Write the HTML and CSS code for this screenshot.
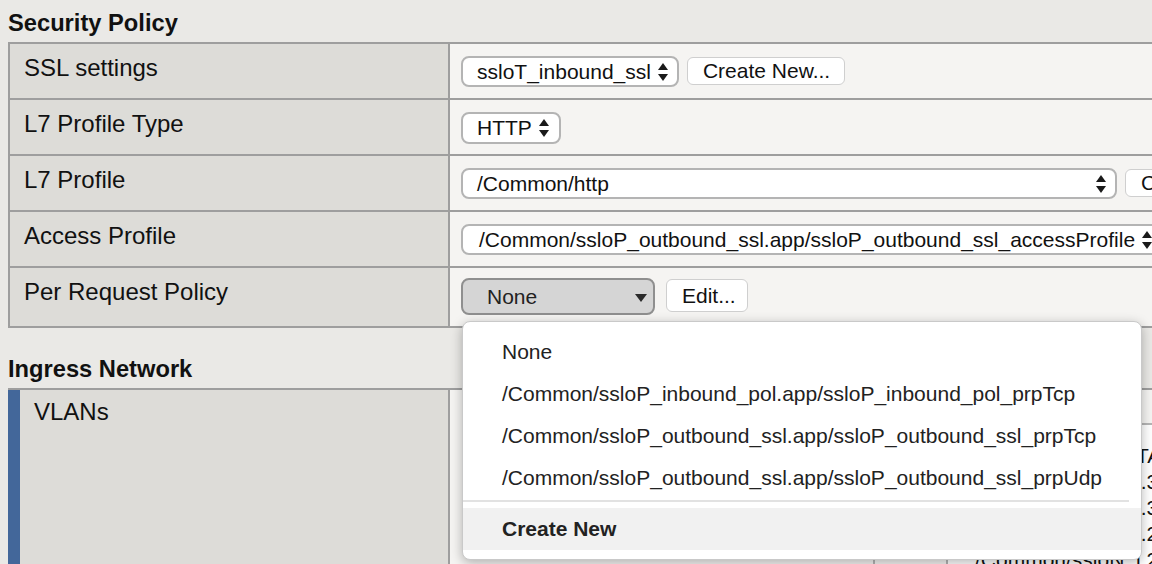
FILE: index.html
```html
<!DOCTYPE html>
<html>
<head>
<meta charset="utf-8">
<title>Security Policy</title>
<link rel="stylesheet" href="styles.css">
</head>
<body>
<div class="page">
  <h2 class="sec-title">Security Policy</h2>
  <div class="tbl">
    <div class="row">
      <div class="lbl">SSL settings</div>
      <div class="val">
        <span class="sel">ssloT_inbound_ssl<svg class="ud" viewBox="0 0 10 18" width="10" height="18"><polygon points="0,7 5,0 10,7"/><polygon points="0,11 5,18 10,11"/></svg></span>
        <span class="btn">Create New...</span>
      </div>
    </div>
    <div class="row">
      <div class="lbl">L7 Profile Type</div>
      <div class="val">
        <span class="sel sel-http">HTTP<svg class="ud" viewBox="0 0 10 18" width="10" height="18"><polygon points="0,7 5,0 10,7"/><polygon points="0,11 5,18 10,11"/></svg></span>
      </div>
    </div>
    <div class="row">
      <div class="lbl">L7 Profile</div>
      <div class="val">
        <span class="sel sel-wide">/Common/http<svg class="ud" viewBox="0 0 10 18" width="10" height="18"><polygon points="0,7 5,0 10,7"/><polygon points="0,11 5,18 10,11"/></svg></span>
        <span class="btn">Create New...</span>
      </div>
    </div>
    <div class="row">
      <div class="lbl">Access Profile</div>
      <div class="val">
        <span class="sel sel-access">/Common/ssloP_outbound_ssl.app/ssloP_outbound_ssl_accessProfile<svg class="ud" viewBox="0 0 10 18" width="10" height="18"><polygon points="0,7 5,0 10,7"/><polygon points="0,11 5,18 10,11"/></svg></span>
      </div>
    </div>
    <div class="row row-tall">
      <div class="lbl">Per Request Policy</div>
      <div class="val">
        <div class="sel-anchor">
          <span class="sel sel-open">None<svg class="dn" viewBox="0 0 12 8" width="12" height="8"><polygon points="0,0 12,0 6,8"/></svg></span>
          <div class="menu">
            <div class="mi">None</div>
            <div class="mi">/Common/ssloP_inbound_pol.app/ssloP_inbound_pol_prpTcp</div>
            <div class="mi">/Common/ssloP_outbound_ssl.app/ssloP_outbound_ssl_prpTcp</div>
            <div class="mi">/Common/ssloP_outbound_ssl.app/ssloP_outbound_ssl_prpUdp</div>
            <div class="menu-sep"></div>
            <div class="mi mi-create">Create New</div>
          </div>
        </div>
        <span class="btn btn-edit">Edit...</span>
      </div>
    </div>
  </div>

  <h2 class="sec-title sec-title-2">Ingress Network</h2>
  <div class="tbl tbl-2">
    <div class="row row-vlan">
      <div class="lbl lbl-blue">VLANs</div>
      <div class="val val-vlan">
        <div class="vlan-btns"></div>
        <div class="vlan-list">
          <div class="vl">/Common/ssloN_TAP</div>
          <div class="vl">/Common/ssloN_i.3</div>
          <div class="vl">/Common/ssloN_i.3</div>
          <div class="vl">/Common/ssloN_i.2</div>
          <div class="vl">/Common/ssloN_i.2</div>
        </div>
      </div>
    </div>
  </div>
</div>
</body>
</html>
```

FILE: styles.css
```css
html, body {
  margin: 0;
  padding: 0;
}
body {
  width: 1152px;
  height: 564px;
  overflow: hidden;
  background: #eae9e6;
  font-family: "Liberation Sans", Arial, Helvetica, sans-serif;
  color: #111;
}
.page {
  padding-left: 8px;
}
.sec-title {
  margin: 0;
  padding-top: 9px;
  height: 28px;
  font-size: 23.7px;
  line-height: 28px;
  font-weight: bold;
  color: #111;
}
.sec-title-2 {
  padding-top: 27px;
}
.tbl {
  margin-top: 5px;
  width: 1400px;
  border-top: 2px solid #9e9e9e;
  border-left: 2px solid #9e9e9e;
}
.tbl-2 {
  border-left: 0;
}
.row {
  display: flex;
  height: 54px;
  border-bottom: 2px solid #9e9e9e;
}
.row-tall {
  height: 58px;
}
.lbl {
  flex: none;
  box-sizing: border-box;
  width: 440px;
  background: #dddcd8;
  border-right: 2px solid #9e9e9e;
  padding: 10px 0 0 14px;
  font-size: 24px;
  line-height: 28px;
}
.val {
  flex: 1;
  background: #f5f4f2;
  display: flex;
  align-items: flex-start;
  gap: 8px;
  padding: 12px 0 0 11px;
}
.row-tall .val {
  padding-top: 10px;
  gap: 11px;
}
.sel {
  flex: none;
  box-sizing: border-box;
  display: inline-flex;
  align-items: center;
  height: 31px;
  border: 2px solid #b4b4b4;
  border-radius: 8px;
  background: #fff;
  font-size: 21px;
  padding: 0 9px 0 14px;
  white-space: nowrap;
  color: #111;
}
.ud {
  margin-left: 7px;
  fill: #1a1a1a;
}
.sel-http {
  width: 100px;
  height: 32px;
}
.sel-wide {
  width: 656px;
  justify-content: space-between;
}
.sel-access {
  padding-left: 16px;
}
.btn {
  flex: none;
  box-sizing: border-box;
  display: inline-flex;
  align-items: center;
  height: 28px;
  margin-top: 1px;
  border: 1px solid #cfcfcf;
  border-radius: 6px;
  background: #fff;
  font-size: 21px;
  padding: 0 14px 0 15px;
  white-space: nowrap;
  color: #111;
}
.btn-edit {
  width: 82px;
  height: 33px;
  padding: 0 0 0 15px;
}
.sel-anchor {
  position: relative;
  flex: none;
}
.sel-open {
  width: 194px;
  height: 37px;
  background: #d5d5d5;
  border-color: #8f8f8f;
  padding-left: 24px;
  padding-right: 6px;
  justify-content: space-between;
  color: #222;
}
.dn {
  fill: #2a2a2a;
  margin-top: 2px;
}
.menu {
  position: absolute;
  left: 1px;
  top: 43px;
  z-index: 5;
  box-sizing: border-box;
  width: 680px;
  height: 239px;
  padding-top: 9px;
  background: #fff;
  border: 1px solid #c9c9c9;
  border-radius: 8px;
  box-shadow: 0 3px 12px rgba(0, 0, 0, 0.28);
}
.mi {
  height: 42px;
  line-height: 42px;
  padding-left: 39px;
  font-size: 21px;
  color: #222;
  white-space: nowrap;
}
.menu-sep {
  height: 2px;
  margin: 1px 12px 6px 0;
  background: #e2e2e2;
}
.mi-create {
  background: #f1f1f1;
  font-weight: bold;
}
.row-vlan {
  height: 300px;
  border-bottom: 0;
}
.lbl-blue {
  width: 442px;
  border-left: 12px solid #43679a;
  padding-top: 8px;
}
.val-vlan {
  padding: 33px 0 0 423px;
  gap: 0;
}
.vlan-btns {
  flex: none;
  width: 71px;
  height: 300px;
  border-left: 2px solid #b5b5b5;
}
.vlan-list {
  flex: none;
  width: 400px;
  height: 300px;
  box-sizing: border-box;
  border-top: 2px solid #b5b5b5;
  border-left: 2px solid #b5b5b5;
  background: #fff;
  padding: 18px 0 0 27px;
}
.vl {
  font-size: 21px;
  line-height: 26px;
  white-space: nowrap;
  color: #111;
}
```
